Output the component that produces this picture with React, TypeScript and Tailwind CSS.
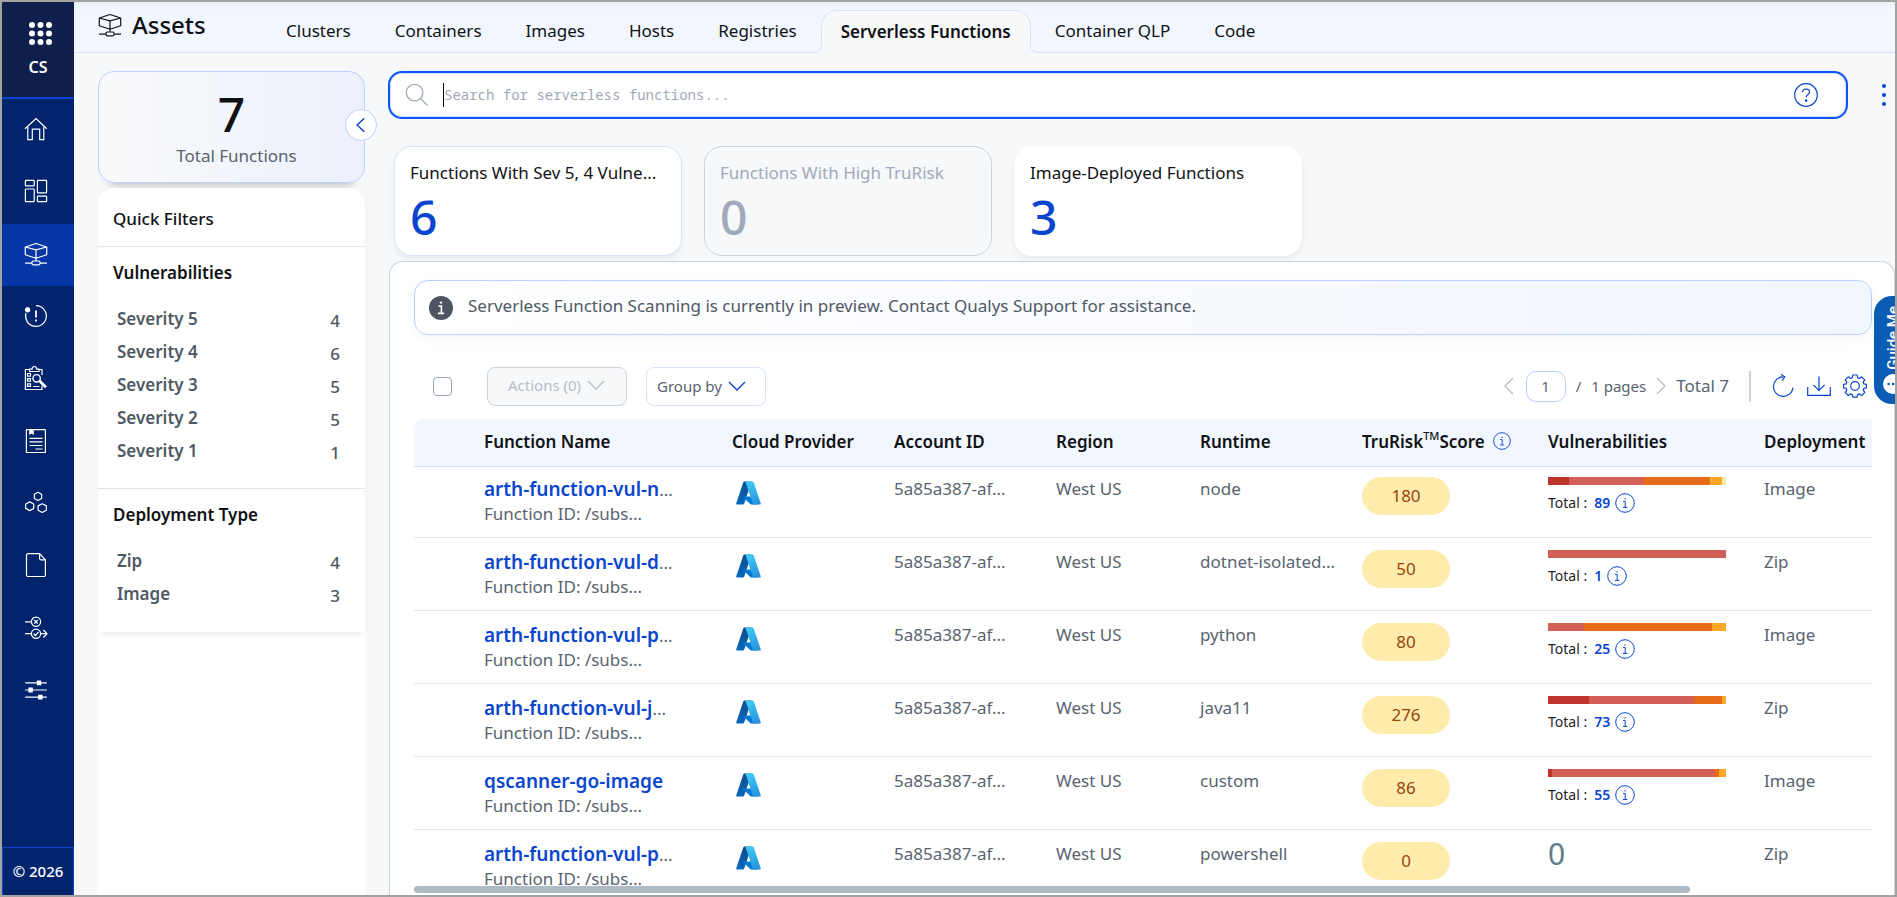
import { useId, useState } from 'react';
import type { ReactNode } from 'react';

type IconProps = { className?: string; children?: ReactNode };

const Line = ({ className = 'size-6', children }: IconProps) => (
    <svg viewBox="0 0 24 24" fill="none" stroke="currentColor" strokeWidth="1.2" className={className} aria-hidden="true">
        {children}
    </svg>
);

const AssetsIcon = ({ className }: IconProps) => (
    <Line className={className}>
        <path d="M12 1.5 22.7 5v7.7L12 16.2 1.3 12.7V5ZM1.3 5 12 7.8 22.7 5M12 7.8v10.9" strokeLinejoin="round" />
        <rect x="8" y="19" width="8" height="3.8" rx="1.2" />
        <path d="M1 21.2h7M16 21.2h7" />
    </Line>
);

const HomeIcon = () => (
    <Line>
        <path d="m1 11.8 11-10.3 10.8 10.3" />
        <path d="M3.8 9.8v12.8h4.5V12.2h7.4v10.4h4.1V9.8" />
    </Line>
);

const DashboardIcon = () => (
    <Line>
        <rect x="1.4" y="1.4" width="8.8" height="5.4" rx=".6" />
        <rect x="13.4" y="1.4" width="9.2" height="12.4" rx=".6" />
        <rect x="1.4" y="10" width="8.8" height="12.6" rx=".6" />
        <rect x="13.4" y="17.2" width="9.2" height="5.4" rx=".6" />
    </Line>
);

const AlertIcon = () => (
    <Line>
        <path d="M12 1.6A10.4 10.4 0 1 1 2 9" />
        <circle cx="3.6" cy="5.8" r="2.1" fill="currentColor" />
        <path d="M12 6.5v7M12 15.5v2" strokeWidth="1.8" />
    </Line>
);

const ClipboardIcon = () => (
    <Line>
        <path d="M5.5 3.5H1.4v20H18v-4M14 3.5h4V9" />
        <path d="M5.5 5.5V3.2h2.6a2.3 2.3 0 0 1 3.4-2.4 2.3 2.3 0 0 1 1 2.4H15v2.3z" />
        <path d="M3.5 7.5h3v2.6h-3zM3.5 12.6h3v2.6h-3zM3.5 17.8h3v2.6h-3zM9 20.5h6.5" />
        <circle cx="12.6" cy="12.3" r="3.7" strokeWidth="1.4" />
        <path d="m15.4 14.8 6.6 6.4" strokeWidth="2.8" />
    </Line>
);

const ReportIcon = () => (
    <Line>
        <rect x="2.4" y=".7" width="19" height="22.8" rx=".6" />
        <path d="M5.2 1v5l2.3-1.6L9.8 6V1z" fill="currentColor" stroke="none" />
        <path d="M5.5 9.3h13M5.5 12.9h13M5.5 16.5h13M11.5 20h7" />
    </Line>
);

const HexagonsIcon = () => (
    <Line>
        <path d="m14 1.2 3.6 2.1v4.2L14 9.6l-3.6-2.1V3.3zM5.7 10.9 9.7 13v4.4l-4 2.2-4-2.2V13zM18.2 12.7l4.1 2.2v4.3l-4.1 2.3-4.1-2.3v-4.3z" strokeLinejoin="round" />
    </Line>
);

const FileIcon = () => (
    <Line>
        <path d="M15.6.7H4a1.5 1.5 0 0 0-1.5 1.5v19.9a1.4 1.4 0 0 0 1.5 1.4h16a1.4 1.4 0 0 0 1.4-1.4V6.8zM15.6.7v4.7a1.4 1.4 0 0 0 1.4 1.4h4.4" strokeLinejoin="round" />
    </Line>
);

const FlowIcon = () => (
    <Line>
        <circle cx="12" cy="5.8" r="4.6" />
        <circle cx="12" cy="17.7" r="4.6" />
        <path d="M1 5.8h6.4M1 17.7h6.4M16.6 17.7h6M19.4 14l3.6 3.7-3.6 3.8M10.2 4l3.6 3.6M13.8 4l-3.6 3.6M9.6 17.6l1.8 1.9 3.2-3.7" />
    </Line>
);

const SlidersIcon = () => (
    <Line>
        <path d="M1.2 4.8h21.6M1.2 12h21.6M1.2 19.1h21.6" />
        <path d="M13.4 3h3.2v3.6h-3.2zM5 10.2h3.2v3.6H5zM14.8 17.3H18v3.6h-3.2z" fill="currentColor" />
    </Line>
);

const AzureLogo = () => {
    const id = useId();
    return (
        <svg viewBox="3 5 90 86" className="mt-1 h-6 w-[25px]" role="img" aria-label="Azure">
            <defs>
                <linearGradient id={`${id}a`} x1="60" y1="13" x2="30" y2="92" gradientUnits="userSpaceOnUse">
                    <stop stopColor="#114a8b" />
                    <stop offset="1" stopColor="#0669bc" />
                </linearGradient>
                <linearGradient id={`${id}b`} x1="46" y1="10" x2="76" y2="89" gradientUnits="userSpaceOnUse">
                    <stop stopColor="#3ccbf4" />
                    <stop offset="1" stopColor="#2892df" />
                </linearGradient>
            </defs>
            <path fill={`url(#${id}a)`} d="M33.338 6.544h26.038l-27.03 80.087a4.152 4.152 0 0 1-3.933 2.824H8.149a4.145 4.145 0 0 1-3.928-5.47L29.404 9.368a4.152 4.152 0 0 1 3.934-2.825z" />
            <path fill="#0078d4" d="M71.175 60.261h-41.29a1.911 1.911 0 0 0-1.305 3.309l26.532 24.764a4.171 4.171 0 0 0 2.846 1.121h23.38z" />
            <path fill={`url(#${id}b)`} d="M66.595 9.364a4.145 4.145 0 0 0-3.928-2.82H33.648a4.146 4.146 0 0 1 3.928 2.82l25.184 74.62a4.146 4.146 0 0 1-3.928 5.472h29.02a4.146 4.146 0 0 0 3.927-5.472z" />
        </svg>
    );
};

const InfoIcon = ({ className = 'size-5' }: IconProps) => (
    <svg viewBox="0 0 20 20" fill="none" stroke="currentColor" className={className} aria-hidden="true">
        <circle cx="10" cy="10" r="9.3" />
        <path d="M8 8.4h2.2v6M7.8 14.4h4.6" />
        <path d="M9.5 5.2h1.2v1.4H9.5z" fill="currentColor" stroke="none" />
    </svg>
);

const Chevron = ({ d, className }: { d: string; className: string }) => (
    <svg viewBox="0 0 18 18" fill="none" stroke="currentColor" strokeWidth="1.3" className={className} aria-hidden="true">
        <path d={d} />
    </svg>
);

const GearIcon = () => (
    <Line className="size-6">
        <circle cx="12" cy="12" r="4.3" />
        <path d="M9.8 1h4.4l.5 2.7 1.7.7 2.3-1.6 3.1 3.1-1.6 2.3.7 1.7 2.6.5v3.4l-2.6.6-.7 1.7 1.6 2.3-3.1 3.1-2.3-1.6-1.7.7-.5 2.6H9.8l-.5-2.6-1.7-.7-2.3 1.6-3.1-3.1 1.6-2.3-.7-1.7L.5 13.8v-3.4l2.6-.5.7-1.7-1.6-2.3 3.1-3.1 2.3 1.6 1.7-.7z" strokeLinejoin="round" />
    </Line>
);

const NAV = [
    { label: 'Home', icon: <HomeIcon /> },
    { label: 'Dashboard', icon: <DashboardIcon /> },
    { label: 'Assets', icon: <AssetsIcon />, active: true },
    { label: 'Events', icon: <AlertIcon /> },
    { label: 'Policies', icon: <ClipboardIcon /> },
    { label: 'Reports', icon: <ReportIcon /> },
    { label: 'Sensors', icon: <HexagonsIcon /> },
    { label: 'Files', icon: <FileIcon /> },
    { label: 'Responses', icon: <FlowIcon /> },
    { label: 'Configuration', icon: <SlidersIcon /> },
];

const TABS = ['Clusters', 'Containers', 'Images', 'Hosts', 'Registries', 'Serverless Functions', 'Container QLP', 'Code'];

const FILTERS = [
    {
        title: 'Vulnerabilities',
        items: [
            ['Severity 5', 4],
            ['Severity 4', 6],
            ['Severity 3', 5],
            ['Severity 2', 5],
            ['Severity 1', 1],
        ],
    },
    {
        title: 'Deployment Type',
        items: [
            ['Zip', 4],
            ['Image', 3],
        ],
    },
];

const BAR_COLORS = ['#c0352b', '#d36058', '#e66c1a', '#ffa827', '#f5eba8'];

// bars: share of severity 5..1 in percent
const ROWS = [
    { name: 'arth-function-vul-n', cut: true, runtime: 'node', score: 180, total: 89, bars: [12, 42, 37, 7, 2], deployment: 'Image' },
    { name: 'arth-function-vul-d', cut: true, runtime: 'dotnet-isolated...', score: 50, total: 1, bars: [0, 100, 0, 0, 0], deployment: 'Zip' },
    { name: 'arth-function-vul-p', cut: true, runtime: 'python', score: 80, total: 25, bars: [0, 20, 72, 8, 0], deployment: 'Image' },
    { name: 'arth-function-vul-j', cut: true, runtime: 'java11', score: 276, total: 73, bars: [23, 59, 16, 2, 0], deployment: 'Zip' },
    { name: 'qscanner-go-image', cut: false, runtime: 'custom', score: 86, total: 55, bars: [2, 91, 3, 4, 0], deployment: 'Image' },
    { name: 'arth-function-vul-p', cut: true, runtime: 'powershell', score: 0, total: 0, bars: [], deployment: 'Zip' },
];

const Sidebar = () => (
    <aside className="flex w-[72px] shrink-0 flex-col bg-[#02246d] text-white">
        <div className="flex h-[97px] shrink-0 flex-col items-center gap-2.5 border-b-2 border-[#0a45cf] bg-[#0f1f4b] pt-5">
            <button aria-label="Applications" className="ml-1">
                <svg viewBox="0 0 23 23" className="size-[23px] fill-white">
                    {[3, 11.5, 20].map((y) => [3, 11.5, 20].map((x) => <circle key={`${x}-${y}`} cx={x} cy={y} r="3" />))}
                </svg>
            </button>
            <span className="text-base leading-6 font-semibold">CS</span>
        </div>
        <nav className="flex h-[623px] shrink-0 flex-col">
            {NAV.map((item) => (
                <a
                    key={item.label}
                    href="#"
                    aria-label={item.label}
                    className={`flex flex-1 items-center justify-center pr-1 pb-0.5 ${item.active ? 'bg-[#0536a5]' : ''}`}
                >
                    {item.icon}
                </a>
            ))}
        </nav>
        <div className="mt-auto flex h-12 shrink-0 items-center justify-center border border-b-0 border-[#0a45cf] text-[15px] font-medium">
            © 2026
        </div>
    </aside>
);

const Header = () => (
    <header className="flex h-[51px] shrink-0 border-b border-[#d6e2ff] bg-linear-to-b from-[#ebeff8] to-[#f2f7ff] to-15% pl-6">
        <div className="flex w-[168px] shrink-0 items-center gap-2.5 pb-1">
            <AssetsIcon className="size-6 shrink-0" />
            <h1 className="text-2xl font-medium">Assets</h1>
        </div>
        <nav className="flex items-end gap-1">
            {TABS.map((tab) =>
                tab === 'Serverless Functions' ? (
                    <a
                        key={tab}
                        href="#"
                        className="relative -mb-px flex h-[43px] items-center rounded-t-2xl border border-b-0 border-[#d6e2ff] bg-[#f7f8fa] px-[19px] font-semibold"
                    >
                        <span className="absolute bottom-0 -left-2 size-2 bg-[#f7f8fa]">
                            <span className="block size-full rounded-br-lg border-r border-b border-[#d6e2ff] bg-[#f2f7ff]" />
                        </span>
                        {tab}
                        <span className="absolute -right-2 bottom-0 size-2 bg-[#f7f8fa]">
                            <span className="block size-full rounded-bl-lg border-b border-l border-[#d6e2ff] bg-[#f2f7ff]" />
                        </span>
                    </a>
                ) : (
                    <a key={tab} href="#" className="flex h-[42px] items-center px-5">
                        {tab}
                    </a>
                )
            )}
        </nav>
    </header>
);

const QuickFilters = () => (
    <aside className="relative flex w-[267px] shrink-0 flex-col">
        <div className="flex h-28 shrink-0 flex-col items-center rounded-2xl border border-[#bcd0ff] bg-linear-to-r from-[#f9fafb] to-[#ebf0fb] pt-3.5 shadow-[0_14px_10px_-12px_rgba(0,0,0,0.25)]">
            <span className="text-5xl leading-[56px] font-medium">7</span>
            <span className="pl-2.5 leading-7 text-[#59636f]">Total Functions</span>
        </div>
        <button
            aria-label="Collapse filters"
            className="absolute top-[38px] -right-3 flex size-8 items-center justify-center rounded-full border border-[#bcd0ff] bg-white text-[#0a45cf]"
        >
            <Chevron d="m12 3-6.5 6 6.5 6" className="size-5" />
        </button>
        <div className="mt-[5px] flex flex-1 flex-col rounded-t-2xl bg-white">
            <div className="pb-px shadow-[0_4px_6px_-2px_rgba(0,0,0,0.08)]">
                <h2 className="px-[15px] pt-[19px] pb-[15px] leading-6 font-medium">Quick Filters</h2>
                {FILTERS.map((group) => (
                    <section key={group.title} className="border-t border-[#e3e5e8] px-[15px] pt-3.5 pb-[21px]">
                        <h3 className="mb-[17px] leading-6 font-semibold">{group.title}</h3>
                        <ul>
                            {group.items.map(([label, count]) => (
                                <li key={label} className="flex h-[33px] items-center justify-between pr-2.5 pl-1 font-semibold text-[#4f5964]">
                                    <span>{label}</span>
                                    <span className="pt-1 font-medium">{count}</span>
                                </li>
                            ))}
                        </ul>
                    </section>
                ))}
            </div>
        </div>
    </aside>
);

const SearchBar = () => {
    const [query, setQuery] = useState('');
    return (
        <div className="flex items-center pl-px">
            <label className="flex h-12 flex-1 items-center rounded-[14px] border-2 border-[#0a55ff] bg-white pr-7 pl-[15px] shadow-[inset_0_0_0_1px_#d6e2ff]">
                <svg viewBox="0 0 24 24" fill="none" stroke="#a3abb8" strokeWidth="1.3" className="size-6 shrink-0" aria-hidden="true">
                    <circle cx="9.6" cy="9.6" r="8.3" />
                    <path d="m15.5 15.5 7 7" />
                </svg>
                <span className="ml-3.5 h-6 w-px bg-black" />
                <input
                    value={query}
                    onChange={(e) => setQuery(e.target.value)}
                    aria-label="Search"
                    placeholder="Search for serverless functions..."
                    className="h-full flex-1 bg-transparent pb-0.5 font-['Noto_Sans_Mono','DejaVu_Sans_Mono',monospace] text-sm outline-none placeholder:text-[#9fa8b5]"
                />
                <button aria-label="Search help" className="text-[#0a45cf]">
                    <Line className="size-6">
                        <circle cx="12" cy="12" r="11.3" />
                        <path d="M8.4 9.2c.2-2 1.6-3 3.6-3s3.6 1 3.6 2.8c0 2.4-3.5 2.5-3.5 5.4" />
                        <circle cx="12.1" cy="17.6" r=".7" fill="currentColor" />
                    </Line>
                </button>
            </label>
            <button aria-label="More options" className="flex w-[47px] justify-end pr-2 text-[#0a45cf]">
                <svg viewBox="0 0 6 24" className="h-6 w-1.5 fill-current">
                    <circle cx="3" cy="3" r="2" />
                    <circle cx="3" cy="12" r="2" />
                    <circle cx="3" cy="21" r="2" />
                </svg>
            </button>
        </div>
    );
};

const SummaryCards = () => (
    <div className="mt-[27px] flex gap-[22px] pl-[7px]">
        <button className="flex h-[110px] w-72 flex-col rounded-[18px] border border-[#d6e2ff] bg-white px-[15px] pt-3.5 text-left shadow-[0_3px_6px_rgba(0,0,0,0.06)]">
            <span className="leading-6">Functions With Sev 5, 4 Vulne...</span>
            <span className="text-5xl leading-[64px] font-medium text-[#0a45cf]">6</span>
        </button>
        <button className="flex h-[110px] w-72 flex-col rounded-[18px] border border-[#cdd3dc] px-[15px] pt-3.5 text-left text-[#a0aabb]">
            <span className="leading-6">Functions With High TruRisk</span>
            <span className="text-5xl leading-[64px] font-medium">0</span>
        </button>
        <button className="flex h-[110px] w-72 flex-col rounded-[18px] border border-white bg-white px-[15px] pt-3.5 text-left shadow-[0_3px_6px_rgba(0,0,0,0.06)]">
            <span className="leading-6">Image-Deployed Functions</span>
            <span className="text-5xl leading-[64px] font-medium text-[#0a45cf]">3</span>
        </button>
    </div>
);

const Toolbar = () => (
    <div className="mt-[31px] flex h-10 shrink-0 items-center pl-[19px] text-[#59636f]">
        <input type="checkbox" aria-label="Select all" className="size-[19px] appearance-none rounded border border-[#9aa5b8] bg-white" />
        <button disabled className="ml-[35px] flex h-[39px] w-[140px] items-center gap-1.5 rounded-lg border border-[#cdd3dc] bg-[#f7f8fa] pb-0.5 pl-5 text-[15px] text-[#b6bdc8]">
            Actions (0)
            <Chevron d="m1 5 8 8 8-8" className="size-[18px]" />
        </button>
        <button className="ml-[19px] flex h-[39px] w-[120px] items-center gap-1.5 rounded-lg border border-[#d6e2ff] bg-white pl-2.5 text-[15px]">
            Group by
            <Chevron d="m1 5 8 8 8-8" className="size-[18px] text-[#0a45cf]" />
        </button>
        <div className="ml-auto flex items-center pr-[5px]">
            <button aria-label="Previous page" className="text-[#b6bdc8]">
                <Chevron d="m13 1-8 8 8 8" className="size-[18px]" />
            </button>
            <input aria-label="Page" defaultValue="1" className="ml-2 h-[31px] w-10 rounded-[10px] border border-[#bcd0ff] text-center text-[15px]" />
            <span className="ml-2.5 text-[15px]">/</span>
            <span className="ml-2.5 text-[15px]">1 pages</span>
            <button aria-label="Next page" className="ml-1.5 text-[#b6bdc8]">
                <Chevron d="m5 1 8 8-8 8" className="size-[18px]" />
            </button>
            <span className="ml-1.5">Total 7</span>
            <span className="ml-5 h-[31px] w-0.5 bg-[#ccd3dc]" />
            <div className="ml-5 flex gap-3 text-[#0a45cf]">
                <button aria-label="Refresh">
                    <Line>
                        <path d="M12.5 2.8A9.8 9.8 0 1 0 22 13.6" />
                        <path d="m10.2.4 3.6 2.4-2.6 3.8" />
                    </Line>
                </button>
                <button aria-label="Download">
                    <Line>
                        <path d="M.7 13v8.4h22.6V13M12 2.5v13.8M6.4 10.8l5.6 5.6 5.6-5.6" />
                    </Line>
                </button>
                <button aria-label="Settings">
                    <GearIcon />
                </button>
            </div>
        </div>
    </div>
);

const FunctionsTable = () => (
    <table className="w-full table-fixed text-left">
        <colgroup>
            <col className="w-[70px]" />
            <col className="w-[248px]" />
            <col className="w-[162px]" />
            <col className="w-[162px]" />
            <col className="w-36" />
            <col className="w-[162px]" />
            <col className="w-[186px]" />
            <col className="w-[216px]" />
            <col />
        </colgroup>
        <thead>
            <tr className="h-[47px] border-b border-[#d6e2ff] bg-[#f2f7ff] *:pb-0.5 *:font-semibold">
                <td className="rounded-tl-lg" />
                <th>Function Name</th>
                <th>Cloud Provider</th>
                <th>Account ID</th>
                <th>Region</th>
                <th>Runtime</th>
                <th>
                    <span className="flex items-center">
                        TruRisk<sup className="text-[11px] font-medium">TM</sup>Score
                        <InfoIcon className="ml-2 size-[18px] text-[#0a45cf]" />
                    </span>
                </th>
                <th>Vulnerabilities</th>
                <th>Deployment</th>
            </tr>
        </thead>
        <tbody>
            {ROWS.map((row, i) => (
                <tr
                    key={i}
                    className="h-[73px] border-b border-[#e3e5e8] align-top leading-6 text-[#59636f] *:pt-3 first:h-[71px] first:*:pt-2.5"
                >
                    <td />
                    <td>
                        <div className="h-6">
                            <a href="#" className="text-[19px] font-semibold text-[#0a45cf]">
                                {row.name}
                            </a>
                            {row.cut && '...'}
                        </div>
                        <div className="leading-[26px]">Function ID: /subs...</div>
                    </td>
                    <td className="pl-1">
                        <AzureLogo />
                    </td>
                    <td>5a85a387-af...</td>
                    <td>West US</td>
                    <td>{row.runtime}</td>
                    <td>
                        <span className="flex h-[38px] w-[88px] items-center justify-center rounded-full bg-[#ffecad] text-[#96440f]">
                            {row.score}
                        </span>
                    </td>
                    <td>
                        {row.total > 0 ? (
                            <>
                                <div className="flex h-2 w-[178px]">
                                    {row.bars.map((share, s) => (
                                        <span key={s} style={{ width: `${share}%`, backgroundColor: BAR_COLORS[s] }} />
                                    ))}
                                </div>
                                <div className="mt-2 flex items-center text-sm leading-5 text-[#1f2429]">
                                    Total :
                                    <a href="#" className="ml-[7px] flex items-center gap-[5px] font-semibold text-[#0a45cf]">
                                        {row.total}
                                        <InfoIcon />
                                    </a>
                                </div>
                            </>
                        ) : (
                            <span className="block text-3xl leading-6 text-[#607d8b]">0</span>
                        )}
                    </td>
                    <td>{row.deployment}</td>
                </tr>
            ))}
        </tbody>
    </table>
);

const GuideMe = () => (
    <button className="absolute top-[294px] -right-4 flex h-[108px] w-[37px] flex-col items-center justify-between rounded-l-[18px] bg-[#0b5cb5] pt-2.5 pb-2.5 text-white">
        <span className="rotate-180 font-[Roboto,sans-serif] text-[15px] leading-5 font-medium [writing-mode:vertical-rl]">Guide Me</span>
        <svg viewBox="0 0 20 20" className="size-5" aria-hidden="true">
            <circle cx="10" cy="10" r="10" fill="#fff" />
            <g fill="#0b5cb5">
                <circle cx="5.6" cy="10" r="1.3" />
                <circle cx="10" cy="10" r="1.3" />
                <circle cx="14.4" cy="10" r="1.3" />
            </g>
        </svg>
    </button>
);

export default function App() {
    return (
        <div className="relative flex h-screen overflow-hidden border-2 border-[#a3a3a1] bg-[#f7f8fa] font-['Noto_Sans',sans-serif] text-[17px] text-[#0f1214]">
            <Sidebar />
            <div className="flex min-w-0 flex-1 flex-col">
                <Header />
                <div className="flex min-h-0 flex-1 gap-[22px] pt-[18px] pl-6">
                    <QuickFilters />
                    <main className="flex min-w-0 flex-1 flex-col">
                        <SearchBar />
                        <SummaryCards />
                        <section className="mt-[5px] ml-0.5 flex min-h-0 flex-1 flex-col rounded-t-[14px] border border-b-0 border-[#cdd3dc] bg-white pt-[18px] pr-[22px] pl-6">
                            <div className="flex h-[55px] shrink-0 items-center gap-[15px] rounded-[14px] border border-[#bcd0ff] bg-linear-to-r from-white to-[#f2f6ff] pl-3.5 text-[#4f5964] shadow-[0_4px_14px_rgba(0,0,0,0.04)]">
                                <svg viewBox="0 0 24 24" className="size-6" aria-hidden="true">
                                    <circle cx="12" cy="12" r="12" fill="#4c5560" />
                                    <path d="M9.4 10h3v7.2M9 17.4h6.2" stroke="#fff" strokeWidth="1.6" fill="none" />
                                    <circle cx="12" cy="6.6" r="1.2" fill="#fff" />
                                </svg>
                                <p className="pb-1">Serverless Function Scanning is currently in preview. Contact Qualys Support for assistance.</p>
                            </div>
                            <Toolbar />
                            <div className="mt-[13px] min-h-0 flex-1 overflow-hidden">
                                <FunctionsTable />
                            </div>
                            <div className="mb-0.5 h-[7px] w-7/8 shrink-0 rounded-full bg-[#aebbc5]" />
                        </section>
                    </main>
                </div>
            </div>
            <GuideMe />
        </div>
    );
}
